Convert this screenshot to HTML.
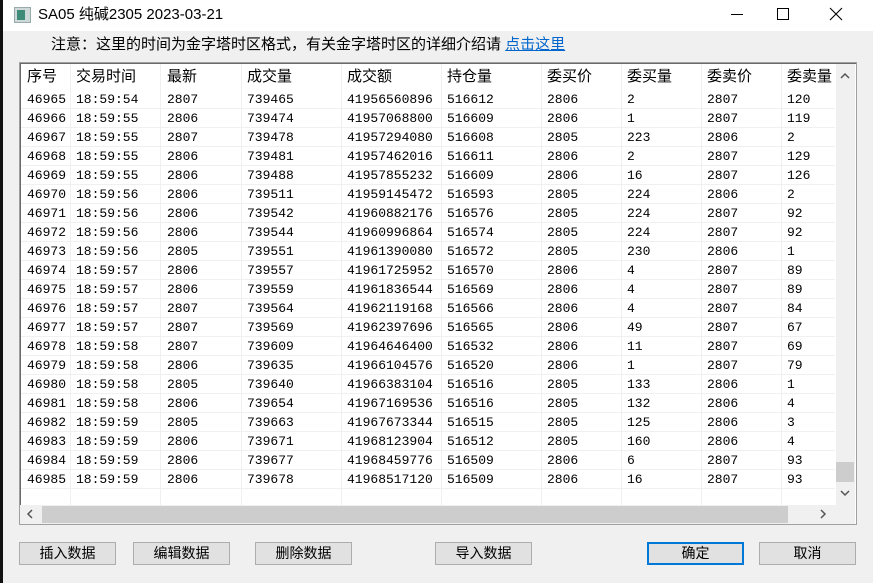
<!DOCTYPE html>
<html><head><meta charset="utf-8"><style>
*{margin:0;padding:0;box-sizing:border-box}
body{width:873px;height:583px;overflow:hidden;background:#f0f0f0;position:relative;font-family:"Liberation Sans","Noto Sans CJK SC",sans-serif}
.ab{position:absolute}
#left{left:0;top:0;width:3px;height:583px;background:#111}
#title{left:3px;top:0;width:870px;height:31px;background:#fff}
.tbl{left:19px;top:62px;width:838px;height:463px;border:1px solid #a0a0a0;background:#fff;box-shadow:inset 1px 1px 0 #696969}
.cell{position:absolute;font-family:"Liberation Mono","Noto Sans CJK SC",monospace;font-size:13px;color:#000;white-space:nowrap;line-height:19px}
.hd{font-family:"Liberation Sans","Noto Sans CJK SC",sans-serif;font-size:15px;line-height:26px}
.btn{position:absolute;top:542px;width:97px;height:23px;background:#e1e1e1;border:1px solid #adadad;font-size:14px;text-align:center;line-height:21px;font-family:"Liberation Sans","Noto Sans CJK SC",sans-serif}
</style></head><body>
<div class="ab" id="left"></div>
<div class="ab" id="title"></div>
<div class="ab" style="left:14px;top:7px;width:17px;height:16px;background:#cfd8d8;border:1px solid #9aa"><div style="position:absolute;left:2px;top:2px;width:8px;height:10px;background:#3f8a78"></div></div>
<div class="ab" style="left:38px;top:5px;font-size:15px;line-height:20px">SA05 纯碱2305 2023-03-21</div>
<div class="ab" style="left:731px;top:14px;width:12px;height:1px;background:#000"></div>
<div class="ab" style="left:777px;top:8px;width:12px;height:12px;border:1px solid #000"></div>
<svg class="ab" style="left:829px;top:7px" width="14" height="14"><path d="M1 1L13 13M13 1L1 13" stroke="#000" stroke-width="1.1"/></svg>
<div class="ab" style="left:51px;top:35px;font-size:15px;line-height:20px;white-space:nowrap">注意：这里的时间为金字塔时区格式，有关金字塔时区的详细介绍请 <span style="color:#0066cc;text-decoration:underline">点击这里</span></div>
<div class="ab tbl"></div>
<div id="grid"></div>
<!-- vscroll -->
<div class="ab" style="left:836px;top:64px;width:19px;height:441px;background:#f0f0f0"></div>
<div class="ab" style="left:836px;top:462px;width:18px;height:20px;background:#cdcdcd"></div>
<svg class="ab" style="left:840px;top:72px" width="10" height="8"><path d="M1 6L5 2L9 6" stroke="#555" stroke-width="1.5" fill="none"/></svg>
<svg class="ab" style="left:840px;top:489px" width="10" height="8"><path d="M1 2L5 6L9 2" stroke="#555" stroke-width="1.5" fill="none"/></svg>
<!-- hscroll -->
<div class="ab" style="left:20px;top:505px;width:835px;height:19px;background:#f0f0f0"></div>
<div class="ab" style="left:42px;top:506px;width:746px;height:17px;background:#cdcdcd"></div>
<svg class="ab" style="left:26px;top:509px" width="8" height="10"><path d="M6 1L2 5L6 9" stroke="#555" stroke-width="1.5" fill="none"/></svg>
<svg class="ab" style="left:819px;top:509px" width="8" height="10"><path d="M2 1L6 5L2 9" stroke="#555" stroke-width="1.5" fill="none"/></svg>
<div class="btn" style="left:19px">插入数据</div>
<div class="btn" style="left:133px">编辑数据</div>
<div class="btn" style="left:255px">删除数据</div>
<div class="btn" style="left:435px">导入数据</div>
<div class="btn" style="left:647px;border:2px solid #0078d7;line-height:19px">确定</div>
<div class="btn" style="left:759px">取消</div>
<script>
var xs=[27,76,167,247,347,447,547,627,707,787],seps=[70,160,241,341,441,541,621,701,781];
var hd=["序号","交易时间","最新","成交量","成交额","持仓量","委买价","委买量","委卖价","委卖量"];
var d=`46965 18:59:54 2807 739465 41956560896 516612 2806 2 2807 120
46966 18:59:55 2806 739474 41957068800 516609 2806 1 2807 119
46967 18:59:55 2807 739478 41957294080 516608 2805 223 2806 2
46968 18:59:55 2806 739481 41957462016 516611 2806 2 2807 129
46969 18:59:55 2806 739488 41957855232 516609 2806 16 2807 126
46970 18:59:56 2806 739511 41959145472 516593 2805 224 2806 2
46971 18:59:56 2806 739542 41960882176 516576 2805 224 2807 92
46972 18:59:56 2806 739544 41960996864 516574 2805 224 2807 92
46973 18:59:56 2805 739551 41961390080 516572 2805 230 2806 1
46974 18:59:57 2806 739557 41961725952 516570 2806 4 2807 89
46975 18:59:57 2806 739559 41961836544 516569 2806 4 2807 89
46976 18:59:57 2807 739564 41962119168 516566 2806 4 2807 84
46977 18:59:57 2807 739569 41962397696 516565 2806 49 2807 67
46978 18:59:58 2807 739609 41964646400 516532 2806 11 2807 69
46979 18:59:58 2806 739635 41966104576 516520 2806 1 2807 79
46980 18:59:58 2805 739640 41966383104 516516 2805 133 2806 1
46981 18:59:58 2806 739654 41967169536 516516 2805 132 2806 4
46982 18:59:59 2805 739663 41967673344 516515 2805 125 2806 3
46983 18:59:59 2806 739671 41968123904 516512 2805 160 2806 4
46984 18:59:59 2806 739677 41968459776 516509 2806 6 2807 93
46985 18:59:59 2806 739678 41968517120 516509 2806 16 2807 93`.split("\n");
var h="";
seps.forEach(function(s){h+='<div class="ab" style="left:'+s+'px;top:64px;width:1px;height:441px;background:#f0f0f0"></div>';});
for(var r=0;r<22;r++){var y=90+r*19;h+='<div class="ab" style="left:21px;top:'+(y+18)+'px;width:814px;height:1px;background:#f0f0f0"></div>';}
hd.forEach(function(t,i){h+='<div class="cell hd" style="left:'+xs[i]+'px;top:64px">'+t+'</div>';});
d.forEach(function(l,r){l.split(" ").forEach(function(t,i){h+='<div class="cell" style="left:'+xs[i]+'px;top:'+(90+r*19)+'px">'+t+'</div>';});});
document.getElementById("grid").innerHTML=h;
</script>
</body></html>
